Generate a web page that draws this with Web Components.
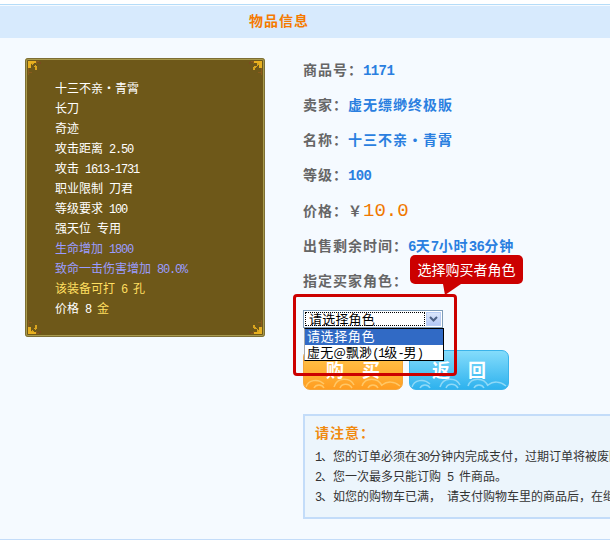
<!DOCTYPE html>
<html lang="zh">
<head>
<meta charset="utf-8">
<title>物品信息</title>
<style>
  html, body { margin: 0; padding: 0; background: #fff; overflow: hidden; }
  body { width: 610px; height: 544px; font-family: "Noto Sans CJK SC", sans-serif; font-size: 12px; }
</style>
</head>
<body>
<shop-page>
  <title-bar slot="title">物品信息</title-bar>
  <item-card slot="card">
    <item-line>十三不亲・青霄</item-line>
    <item-line>长刀</item-line>
    <item-line>奇迹</item-line>
    <item-line>攻击距离<latin-text> 2.50</latin-text></item-line>
    <item-line>攻击<latin-text> 1613-1731</latin-text></item-line>
    <item-line>职业限制<latin-text> </latin-text>刀君</item-line>
    <item-line>等级要求<latin-text> 100</latin-text></item-line>
    <item-line>强天位<latin-text> </latin-text>专用</item-line>
    <item-line tone="blue">生命增加<latin-text> 1800</latin-text></item-line>
    <item-line tone="blue">致命一击伤害增加<latin-text> 80.0%</latin-text></item-line>
    <item-line tone="gold">该装备可打<latin-text> 6 </latin-text>孔</item-line>
    <item-line>价格<latin-text> 8 </latin-text><span style="color:#ffdf60">金</span></item-line>
  </item-card>
  <info-row slot="info" label="商品号："><latin-text>1171</latin-text></info-row>
  <info-row slot="info" label="卖家：">虚无缥缈终极販</info-row>
  <info-row slot="info" label="名称：">十三不亲・青霄</info-row>
  <info-row slot="info" label="等级："><latin-text>100</latin-text></info-row>
  <info-row slot="info" label="价格：" price><span style="color:#666">￥</span><price-text>10.0</price-text></info-row>
  <info-row slot="info" label="出售剩余时间："><latin-text>6</latin-text>天<latin-text>7</latin-text>小时<latin-text>36</latin-text>分钟</info-row>
  <info-row slot="info" label="指定买家角色："></info-row>
  <role-picker slot="picker" hint="选择购买者角色">
    <span slot="current">请选择角色</span>
    <span slot="first">请选择角色</span>
    <span slot="second">虚无@飘渺<latin-text>(1</latin-text>级<latin-text>-</latin-text>男<latin-text>)</latin-text></span>
  </role-picker>
  <game-button slot="actions" tone="orange">购　买</game-button>
  <game-button slot="actions" tone="blue">返　回</game-button>
  <notice-box slot="notice">
    <span slot="heading">请注意：</span>
    <notice-line><latin-text>1</latin-text>、您的订单必须在<latin-text>30</latin-text>分钟内完成支付，过期订单将被废除</notice-line>
    <notice-line><latin-text>2</latin-text>、您一次最多只能订购<latin-text> 5 </latin-text>件商品。</notice-line>
    <notice-line><latin-text>3</latin-text>、如您的购物车已满，<latin-text> </latin-text>请支付购物车里的商品后，在继续</notice-line>
  </notice-box>
</shop-page>

<script>
// mono digits at half the width of a CJK glyph, like the old bitmap font
class LatinText extends HTMLElement {
  constructor() {
    super();
    this.attachShadow({ mode: "open" }).innerHTML = `<style>
        :host {
          font-family: "Liberation Mono", monospace;
          font-size: var(--latin-size, 12px);
          letter-spacing: var(--latin-spacing, -1.2px);
        }
        slot { white-space: pre; }
      </style><slot></slot>`;
  }
}

class PriceText extends HTMLElement {
  constructor() {
    super();
    this.attachShadow({ mode: "open" }).innerHTML = `<style>
        :host {
          color: #f07800;
          font: 400 19px "Liberation Mono", monospace;
          letter-spacing: 0;
        }
      </style><slot></slot>`;
  }
}

class ShopPage extends HTMLElement {
  constructor() {
    super();
    this.attachShadow({ mode: "open" }).innerHTML = `
      <style>
        :host {
          display: block;
          width: 610px;
          height: 540px;
          overflow: hidden;
          box-sizing: border-box;
          padding-top: 4px;
          background: #fff;
        }
        .sheet {
          height: 536px;
          box-sizing: border-box;
          background: #f5faff;
          border-top: 1px solid #b5dcf8;
          border-bottom: 1px solid #c3dcf9;
          overflow: hidden;
        }
        .main {
          display: flex;
          padding-left: 25px;
        }
        .left {
          width: 278px;
          flex: none;
          padding-top: 20px;
        }
        .right {
          width: 420px;
          flex: none;
          padding-top: 14px;
        }
        .actions {
          display: flex;
          gap: 6px;
          margin-top: 22px;
        }
        .picker { margin-top: 12px; }
        .notice { margin-top: 24px; }
      </style>
      <div class="sheet">
        <slot name="title"></slot>
        <div class="main">
          <div class="left"><slot name="card"></slot></div>
          <div class="right">
            <slot name="info"></slot>
            <div class="picker"><slot name="picker"></slot></div>
            <div class="actions"><slot name="actions"></slot></div>
            <div class="notice"><slot name="notice"></slot></div>
          </div>
        </div>
      </div>`;
  }
}

class TitleBar extends HTMLElement {
  constructor() {
    super();
    this.attachShadow({ mode: "open" }).innerHTML = `
      <style>
        :host {
          display: block;
          height: 32px;
          margin-top: 1px;
          padding-left: 249px;
          background: #d7eafd;
          color: #f57a00;
          font-size: 14px;
          font-weight: 700;
          letter-spacing: 1px;
          line-height: 28px;
        }
      </style>
      <slot></slot>`;
  }
}

const CORNER = `
  <svg width="14" height="14" viewBox="0 0 14 14" shape-rendering="crispEdges">
    <path d="M0 0h8v2H3v5H0z" fill="#e8b020"/>
    <path d="M3 2h2l4 4v3h-2v-2L3 3z" fill="#d9a41e"/>
    <path d="M8 0h3v1H9v2H8zM0 7h1v4h3v1H1v2H0z" fill="#8a5a1c"/>
    <path d="M5 3h2v2H5z" fill="#6e5819"/>
    <path d="M10 1h3v2h-1V2h-2z" fill="#7a4a20"/>
  </svg>`;

class ItemCard extends HTMLElement {
  constructor() {
    super();
    this.attachShadow({ mode: "open" }).innerHTML = `
      <style>
        :host {
          display: block;
          width: 240px;
          height: 279px;
          box-sizing: border-box;
          position: relative;
          padding: 18px 0 0 28px;
          background: #6e5819;
          border: 2px solid #a89a4e;
          outline: 1px solid #7d6e34;
          outline-offset: -1px;
          border-radius: 3px;
        }
        svg { display: block; }
        .corner { position: absolute; width: 14px; height: 14px; }
        .tl { left: 1px; top: 1px; }
        .tr { right: 1px; top: 1px; transform: scaleX(-1); }
        .bl { left: 1px; bottom: 1px; transform: scaleY(-1); }
        .br { right: 1px; bottom: 1px; transform: scale(-1, -1); }
      </style>
      <div class="corner tl">${CORNER}</div>
      <div class="corner tr">${CORNER}</div>
      <div class="corner bl">${CORNER}</div>
      <div class="corner br">${CORNER}</div>
      <slot></slot>`;
  }
}

class ItemLine extends HTMLElement {
  constructor() {
    super();
    this.attachShadow({ mode: "open" }).innerHTML = `
      <style>
        :host {
          display: block;
          height: 20px;
          line-height: 20px;
          color: #fff;
          font-size: 12px;
          white-space: nowrap;
        }
        :host([tone="blue"]) { color: #9a9cff; }
        :host([tone="gold"]) { color: #ffdf60; }
      </style>
      <slot></slot>`;
  }
}

class InfoRow extends HTMLElement {
  constructor() {
    super();
    this.attachShadow({ mode: "open" }).innerHTML = `
      <style>
        :host {
          display: block;
          height: 35px;
          line-height: 35px;
          font-size: 14px;
          font-weight: 700;
          letter-spacing: 1px;
          color: #2a7fe0;
          white-space: nowrap;
          --latin-size: 14px;
          --latin-spacing: -0.6px;
        }
        :host([price]) { height: 36px; line-height: 36px; }
        .label { color: #666; }
      </style>
      <span class="label">${this.getAttribute("label")}</span><slot></slot>`;
  }
}

class RolePicker extends HTMLElement {
  constructor() {
    super();
    this.attachShadow({ mode: "open" }).innerHTML = `
      <style>
        :host {
          display: block;
          position: relative;
          z-index: 2;
          width: 140px;
          height: 18px;
          font-size: 13px;
          line-height: 15px;
          color: #000;
          --latin-size: 12px;
          --latin-spacing: -1.2px;
          letter-spacing: 0.2px;
        }
        .field {
          height: 18px;
          box-sizing: border-box;
          border: 1px solid #7f9db9;
          background: #fff;
          padding: 1px;
          display: flex;
        }
        .value {
          flex: 1;
          padding-left: 3px;
          border: 1px dotted #000;
          white-space: nowrap;
          line-height: 12px;
        }
        .arrow {
          width: 15px;
          flex: none;
          margin-left: 1px;
          background: linear-gradient(#dbe6fb, #b4c8f6);
          border: 1px solid #b9cdf4;
          box-sizing: border-box;
          display: flex;
          align-items: center;
          justify-content: center;
        }
        .list {
          position: absolute;
          left: 1px;
          top: 18px;
          width: 140px;
          box-sizing: border-box;
          height: 33px;
          background: #fff;
          border: 1px solid #000;
          border-left: 1px solid #a9a9a9;
          white-space: nowrap;
        }
        .row { height: 16px; line-height: 14px; padding-left: 2px; overflow: hidden; }
        .row.on { background: #316ac5; color: #fff; letter-spacing: 0.6px; }
        .frame {
          position: absolute;
          left: -10px;
          top: -16px;
          width: 164px;
          height: 82px;
          box-sizing: border-box;
          border: 3px solid #cc0000;
          border-radius: 4px;
          pointer-events: none;
        }
        .hint {
          position: absolute;
          left: 107px;
          top: -55px;
          width: 113px;
          height: 29px;
          background: #cc0000;
          border-radius: 5px;
          color: #fff;
          font-size: 14px;
          letter-spacing: 0;
          line-height: 29px;
          text-align: center;
          white-space: nowrap;
        }
        .hint::after {
          content: "";
          position: absolute;
          left: 33px;
          top: 29px;
          border-left: 2px solid transparent;
          border-right: 16px solid transparent;
          border-top: 11px solid #cc0000;
        }
      </style>
      <div class="field">
        <div class="value"><slot name="current"></slot></div>
        <div class="arrow">
          <svg width="9" height="6" viewBox="0 0 9 6"><path d="M1 1l3.5 3.5L8 1" fill="none" stroke="#4d6185" stroke-width="2"/></svg>
        </div>
      </div>
      <div class="list">
        <div class="row on"><slot name="first"></slot></div>
        <div class="row"><slot name="second"></slot></div>
      </div>
      <div class="frame"></div>
      <div class="hint">${this.getAttribute("hint")}</div>`;
  }
}

class GameButton extends HTMLElement {
  constructor() {
    super();
    const wave = this.getAttribute("tone") === "blue" ? "#8fd9f7" : "#ffc766";
    this.attachShadow({ mode: "open" }).innerHTML = `
      <style>
        :host {
          display: block;
          position: relative;
          width: 100px;
          height: 40px;
          box-sizing: border-box;
          overflow: hidden;
          border-radius: 7px;
          color: #fff;
          font-size: 18px;
          font-weight: 700;
          line-height: 36px;
          text-align: center;
          letter-spacing: 0;
        }
        :host([tone="orange"]) {
          background: linear-gradient(#ffc84f, #ff9d20);
          border: 1px solid #f4a63c;
        }
        :host([tone="blue"]) {
          background: linear-gradient(#84dcfb, #2eb2ee);
          border: 1px solid #3ab3ea;
        }
        svg { position: absolute; left: 0; bottom: 0; }
        span { position: relative; }
      </style>
      <svg width="98" height="16" viewBox="0 0 98 16" fill="none" stroke="${wave}" stroke-width="1.5">
        <path d="M2 14c2-7 12-9 18-3M10 15c2-4 8-4 10 0M30 14c3-10 16-10 20-2M36 15c2-5 9-5 12 0M58 13c3-9 16-9 20 0M64 15c2-4 8-4 10 0M78 12c5-4 12-4 18 1"/>
      </svg>
      <span><slot></slot></span>`;
  }
}

class NoticeBox extends HTMLElement {
  constructor() {
    super();
    this.attachShadow({ mode: "open" }).innerHTML = `
      <style>
        :host {
          display: block;
          width: 400px;
          height: 105px;
          box-sizing: border-box;
          padding: 6px 0 0 10px;
          background: #ecf5fc;
          border: 2px solid #c3dcf9;
          color: #333;
          font-size: 12px;
          white-space: nowrap;
        }
        .heading {
          height: 24px;
          line-height: 20px;
          color: #f08a10;
          font-size: 14px;
          font-weight: 700;
          letter-spacing: 1px;
        }
      </style>
      <div class="heading"><slot name="heading"></slot></div>
      <slot></slot>`;
  }
}

class NoticeLine extends HTMLElement {
  constructor() {
    super();
    this.attachShadow({ mode: "open" }).innerHTML = `
      <style>
        :host {
          display: block;
          height: 20px;
          line-height: 20px;
        }
      </style>
      <slot></slot>`;
  }
}

customElements.define("latin-text", LatinText);
customElements.define("price-text", PriceText);
customElements.define("shop-page", ShopPage);
customElements.define("title-bar", TitleBar);
customElements.define("item-card", ItemCard);
customElements.define("item-line", ItemLine);
customElements.define("info-row", InfoRow);
customElements.define("role-picker", RolePicker);
customElements.define("game-button", GameButton);
customElements.define("notice-box", NoticeBox);
customElements.define("notice-line", NoticeLine);
</script>
</body>
</html>
